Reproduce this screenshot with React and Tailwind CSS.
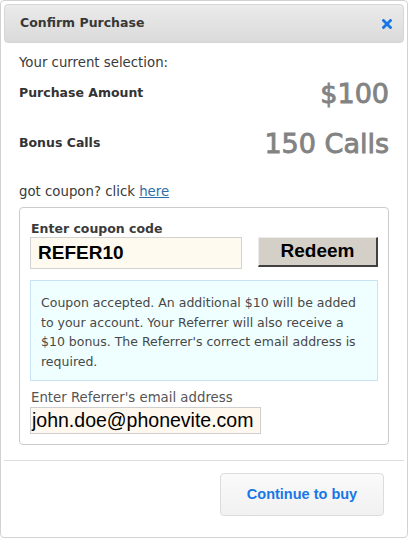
import React from 'react';

function CloseIcon() {
  return (
    <svg width="10" height="10" viewBox="0 0 10 10" className="block">
      <path d="M1.5 1.5 L8.5 8.5 M8.5 1.5 L1.5 8.5" stroke="#1877e6" strokeWidth="2.8" strokeLinecap="square" />
    </svg>
  );
}

export default function App() {
  return (
    <div className="w-[408px] h-[538px] bg-white border border-[#d2d2d2] rounded-[4px] p-[3px] flex flex-col font-['DejaVu_Sans',sans-serif] text-[#333]">
      {/* header */}
      <div className="h-[39px] shrink-0 flex items-center justify-between pl-[15px] pr-[11px] rounded-[4px] border border-[#d6d6d6] bg-gradient-to-b from-[#ebebeb] to-[#dadada]">
        <span className="font-bold text-[12.5px] text-[#383838]">Confirm Purchase</span>
        <button className="cursor-pointer">
          <CloseIcon />
        </button>
      </div>

      {/* body */}
      <div className="px-[15px] pb-[15px]">
        <div className="pt-[11px] leading-[17px] text-[13.3px] text-[#3a3a3a]">Your current selection:</div>

        <div className="h-[45px] flex items-center justify-between">
          <span className="font-bold text-[12.5px] text-[#333]">Purchase Amount</span>
          <span className="text-[27px] text-[#838383] leading-none [-webkit-text-stroke:0.9px_#838383]">$100</span>
        </div>

        <div className="mt-[5px] h-[45px] flex items-center justify-between">
          <span className="font-bold text-[12.5px] text-[#333]">Bonus Calls</span>
          <span className="text-[27px] text-[#838383] leading-none [-webkit-text-stroke:0.9px_#838383]">150 Calls</span>
        </div>

        <div className="mt-[16px] leading-[20px] text-[13.3px] text-[#3a3a3a]">
          got coupon? click <a href="#" className="text-[#2f6fa7] underline">here</a>
        </div>

        {/* coupon box */}
        <div className="mt-[5px] border border-[#cccccc] rounded-[4px] px-[10px] pt-[13px] pb-[10px]">
          <div className="font-bold text-[12.5px] leading-[16px] text-[#3a3a3a] pl-px">Enter coupon code</div>

          <div className="flex items-start justify-between">
            <div className="w-[212px] h-[32px] bg-[#fffaf0] border border-[#d2d2d2] flex items-center pl-[7px] font-['Liberation_Sans',Arial,sans-serif] font-bold text-[19px] text-black">
              REFER10
            </div>
            <button className="w-[120px] h-[30px] bg-[#d4d0c8] border-t border-l border-t-[#ececec] border-l-[#ececec] border-r-2 border-b-2 border-r-[#404040] border-b-[#404040] flex items-center justify-center font-['Liberation_Sans',Arial,sans-serif] font-bold text-[19px] text-black">
              Redeem
            </button>
          </div>

          <div className="mt-[11px] bg-[#efffff] border border-[#c8e4f2] pl-[10px] pr-[12px] pt-[12px] pb-[9px] text-[12.5px] leading-[19.5px] text-[#484848]">
            Coupon accepted. An additional $10 will be added to your account. Your Referrer will also receive a $10 bonus. The Referrer's correct email address is required.
          </div>

          <div className="mt-[8px] text-[13.3px] leading-[17px] text-[#555] pl-px">Enter Referrer's email address</div>
          <div className="mt-px w-[231px] h-[27px] bg-[#fff8ee] border border-[#cfcfcf] flex items-center pl-px font-['Liberation_Sans',Arial,sans-serif] text-[19.5px] text-black">
            john.doe@phonevite.com
          </div>
        </div>
      </div>

      {/* footer */}
      <div className="border-t border-[#dddddd] flex justify-end pt-[12px] pr-[20px]">
        <button className="w-[164px] h-[43px] rounded-[4px] border border-[#dcdcdc] bg-gradient-to-b from-[#fafafa] to-[#f1f1f1] font-['Liberation_Sans',Arial,sans-serif] font-bold text-[14.5px] text-[#1877e6]">
          Continue to buy
        </button>
      </div>
    </div>
  );
}
